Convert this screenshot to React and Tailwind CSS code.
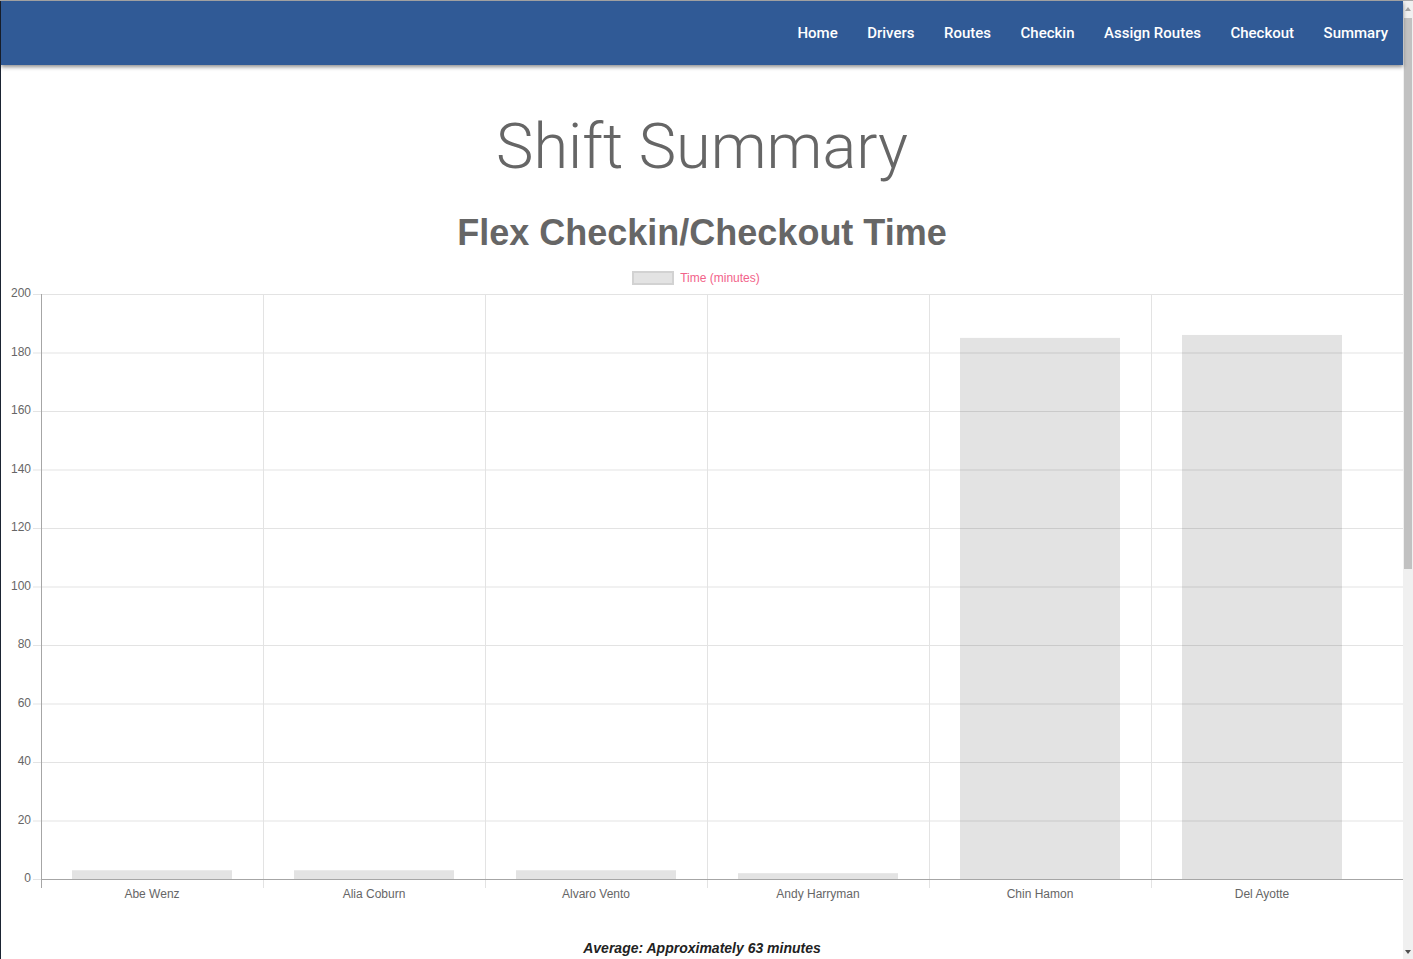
import React from 'react';

const drivers = [
  { name: 'Abe Wenz', minutes: 3 },
  { name: 'Alia Coburn', minutes: 3 },
  { name: 'Alvaro Vento', minutes: 3 },
  { name: 'Andy Harryman', minutes: 2 },
  { name: 'Chin Hamon', minutes: 185 },
  { name: 'Del Ayotte', minutes: 186 },
];

const navLinks = ['Home', 'Drivers', 'Routes', 'Checkin', 'Assign Routes', 'Checkout', 'Summary'];

// chart geometry (svg coords)
const TOP = 9;
const BOTTOM = 594;
const LEFT = 40;
const RIGHT = 1402;
const COL = 222;
const scaleY = (v) => BOTTOM - (v / 200) * (BOTTOM - TOP);

function TimeChart() {
  const ticks = [0, 20, 40, 60, 80, 100, 120, 140, 160, 180, 200];
  return (
    <svg width="1402" height="625" className="block" style={{ fontFamily: '"Liberation Sans", Arial, sans-serif' }}>
      {/* horizontal grid */}
      {ticks.map((t) => (
        <g key={t}>
          <line x1={32} x2={t === 0 ? LEFT : RIGHT} y1={scaleY(t) + 0.5} y2={scaleY(t) + 0.5} stroke="#e3e3e3" />
          <text x={30} y={scaleY(t)} textAnchor="end" dominantBaseline="middle" fontSize="12" fill="#666">
            {t}
          </text>
        </g>
      ))}
      {/* vertical grid */}
      {[1, 2, 3, 4, 5].map((i) => (
        <line key={i} x1={LEFT + COL * i + 0.5} x2={LEFT + COL * i + 0.5} y1={TOP} y2={BOTTOM + 9} stroke="#e3e3e3" />
      ))}
      {/* bars */}
      {drivers.map((d, i) => (
        <rect
          key={d.name}
          x={LEFT + COL * i + 31}
          y={scaleY(d.minutes)}
          width={160}
          height={BOTTOM - scaleY(d.minutes)}
          fill="#000"
          fillOpacity="0.11"
        />
      ))}
      {/* axes */}
      <line x1={LEFT + 0.5} x2={LEFT + 0.5} y1={TOP} y2={BOTTOM + 9} stroke="#a6a6a6" />
      <line x1={LEFT} x2={RIGHT} y1={BOTTOM + 0.5} y2={BOTTOM + 0.5} stroke="#a6a6a6" />
      {drivers.map((d, i) => (
        <text key={d.name} x={LEFT + COL * i + 111} y={610} textAnchor="middle" dominantBaseline="middle" fontSize="12" fill="#666">
          {d.name}
        </text>
      ))}
    </svg>
  );
}

export default function App() {
  return (
    <div className="h-[959px] overflow-hidden flex flex-col bg-white">
      <div className="h-px bg-[#a9a9a9]" />
      <div className="flex flex-1 min-h-0 border-l border-[#1b2433]">
        <div className="flex-1 flex flex-col min-w-0">
          <nav className="h-[64px] bg-[#305a96] flex items-center justify-end pr-[15px] gap-[29.5px] shadow-[0_2px_4px_rgba(0,0,0,0.45)] relative z-10">
            {navLinks.map((l) => (
              <a key={l} href="#" className="text-white text-[15px] font-medium" style={{ fontFamily: 'Roboto, sans-serif' }}>
                {l}
              </a>
            ))}
          </nav>
          <h1 className="mt-[42px] text-center text-[63px] leading-[80px] font-light text-[#666]" style={{ fontFamily: 'Roboto, sans-serif' }}>
            Shift Summary
          </h1>
          <h2 className="mt-[24px] text-center text-[36px] leading-[44px] font-bold text-[#666]" style={{ fontFamily: '"Liberation Sans", Arial, sans-serif' }}>
            Flex Checkin/Checkout Time
          </h2>
          <div className="mt-[16px] h-[14px] flex items-center justify-center gap-[6px] pr-[12px]">
            <span className="w-[42px] h-[14px] bg-[#e3e3e3] border-2 border-[#d2d2d2]" />
            <span className="text-[12px] text-[#f2638a]" style={{ fontFamily: '"Liberation Sans", Arial, sans-serif' }}>
              Time (minutes)
            </span>
          </div>
          <TimeChart />
          <p className="mt-[28px] text-center text-[14px] leading-[20px] font-bold italic text-[#222]" style={{ fontFamily: '"Liberation Sans", Arial, sans-serif' }}>
            Average: Approximately 63 minutes
          </p>
        </div>
        {/* scrollbar */}
        <div className="w-[10px] bg-[#f0f0f0] flex flex-col items-center">
          <span className="mt-[6px] w-0 h-0 border-l-[3px] border-r-[3px] border-b-[4px] border-l-transparent border-r-transparent border-b-[#a3a3a3]" />
          <div className="mt-[7px] w-[8px] h-[551px] bg-[#c1c1c1]" />
          <div className="flex-1" />
          <span className="mb-[5px] w-0 h-0 border-l-[3px] border-r-[3px] border-t-[4px] border-l-transparent border-r-transparent border-t-[#505050]" />
        </div>
      </div>
    </div>
  );
}
